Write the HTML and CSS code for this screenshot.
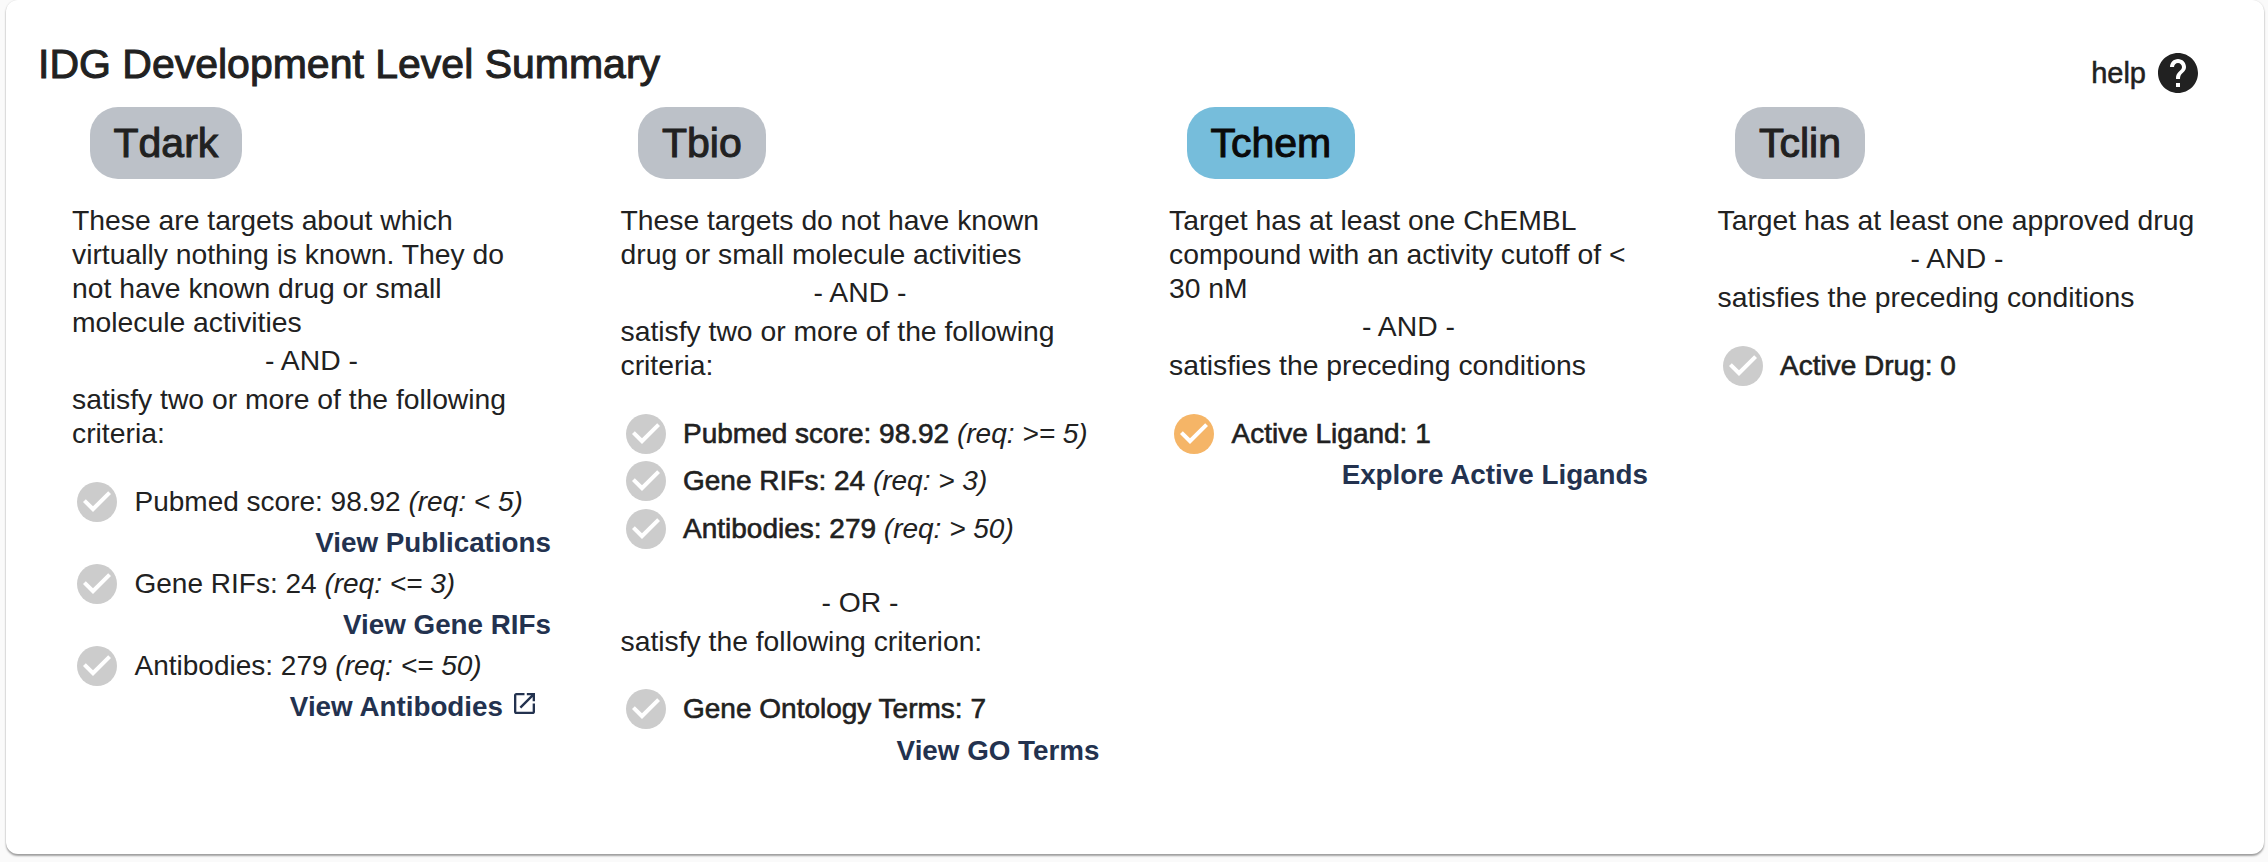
FILE: index.html
```html
<!DOCTYPE html>
<html lang="en">
<head>
<meta charset="utf-8">
<title>IDG Development Level Summary</title>
<link rel="stylesheet" href="styles.css">
</head>
<body>
<main class="card">
  <header class="head">
    <h1 class="title">IDG Development Level Summary</h1>
    <div class="help">help
      <svg class="help-icon" viewBox="2 2 20 20"><path fill="#212121" d="M12 2C6.48 2 2 6.48 2 12s4.48 10 10 10 10-4.48 10-10S17.52 2 12 2zm1 17h-2v-2h2v2zm2.07-7.75l-.9.92C13.45 12.9 13 13.5 13 15h-2v-.5c0-1.1.45-2.1 1.17-2.83l1.24-1.26c.37-.36.59-.86.59-1.41 0-1.1-.9-2-2-2s-2 .9-2 2H8c0-2.21 1.79-4 4-4s4 1.79 4 4c0 .88-.36 1.68-.93 2.25z"/></svg>
    </div>
  </header>
  <div class="cols">
    <section class="col">
      <div class="pill">Tdark</div>
      <p class="txt">These are targets about which virtually nothing is known. They do not have known drug or small molecule activities</p>
      <p class="sep">- AND -</p>
      <p class="txt">satisfy two or more of the following criteria:</p>
      <ul class="rows">
        <li class="row tall"><svg class="chk" viewBox="2 2 20 20"><circle cx="12" cy="12" r="10" fill="#cccccc"/><path fill="#fff" d="M10 17l-5-5 1.41-1.41L10 14.17l7.59-7.59L19 8l-9 9z"/></svg><span>Pubmed score: 98.92 <em>(req: &lt; 5)</em></span></li>
        <li class="lnk"><a href="#">View Publications</a></li>
        <li class="row tall"><svg class="chk" viewBox="2 2 20 20"><circle cx="12" cy="12" r="10" fill="#cccccc"/><path fill="#fff" d="M10 17l-5-5 1.41-1.41L10 14.17l7.59-7.59L19 8l-9 9z"/></svg><span>Gene RIFs: 24 <em>(req: &lt;= 3)</em></span></li>
        <li class="lnk"><a href="#">View Gene RIFs</a></li>
        <li class="row tall"><svg class="chk" viewBox="2 2 20 20"><circle cx="12" cy="12" r="10" fill="#cccccc"/><path fill="#fff" d="M10 17l-5-5 1.41-1.41L10 14.17l7.59-7.59L19 8l-9 9z"/></svg><span>Antibodies: 279 <em>(req: &lt;= 50)</em></span></li>
        <li class="lnk lnk-ext"><a href="#">View Antibodies</a><svg class="ext" viewBox="3 3 18 18"><path fill="#23324f" d="M19 19H5V5h7V3H5c-1.11 0-2 .9-2 2v14c0 1.1.89 2 2 2h14c1.1 0 2-.9 2-2v-7h-2v7zM14 3v2h3.59l-9.83 9.83 1.41 1.41L19 6.41V10h2V3h-7z"/></svg></li>
      </ul>
    </section>
    <section class="col">
      <div class="pill">Tbio</div>
      <p class="txt">These targets do not have known drug or small molecule activities</p>
      <p class="sep">- AND -</p>
      <p class="txt">satisfy two or more of the following criteria:</p>
      <ul class="rows rows-tight">
        <li class="row"><svg class="chk" viewBox="2 2 20 20"><circle cx="12" cy="12" r="10" fill="#cccccc"/><path fill="#fff" d="M10 17l-5-5 1.41-1.41L10 14.17l7.59-7.59L19 8l-9 9z"/></svg><span class="med">Pubmed score: 98.92 <em class="plain">(req: &gt;= 5)</em></span></li>
        <li class="row"><svg class="chk" viewBox="2 2 20 20"><circle cx="12" cy="12" r="10" fill="#cccccc"/><path fill="#fff" d="M10 17l-5-5 1.41-1.41L10 14.17l7.59-7.59L19 8l-9 9z"/></svg><span class="med">Gene RIFs: 24 <em class="plain">(req: &gt; 3)</em></span></li>
        <li class="row"><svg class="chk" viewBox="2 2 20 20"><circle cx="12" cy="12" r="10" fill="#cccccc"/><path fill="#fff" d="M10 17l-5-5 1.41-1.41L10 14.17l7.59-7.59L19 8l-9 9z"/></svg><span class="med">Antibodies: 279 <em class="plain">(req: &gt; 50)</em></span></li>
      </ul>
      <p class="sep sep-or">- OR -</p>
      <p class="txt">satisfy the following criterion:</p>
      <ul class="rows">
        <li class="row tall"><svg class="chk" viewBox="2 2 20 20"><circle cx="12" cy="12" r="10" fill="#cccccc"/><path fill="#fff" d="M10 17l-5-5 1.41-1.41L10 14.17l7.59-7.59L19 8l-9 9z"/></svg><span class="med">Gene Ontology Terms: 7</span></li>
        <li class="lnk"><a href="#">View GO Terms</a></li>
      </ul>
    </section>
    <section class="col">
      <div class="pill pill-on">Tchem</div>
      <p class="txt">Target has at least one ChEMBL compound with an activity cutoff of &lt; 30 nM</p>
      <p class="sep">- AND -</p>
      <p class="txt">satisfies the preceding conditions</p>
      <ul class="rows">
        <li class="row tall"><svg class="chk" viewBox="2 2 20 20"><circle cx="12" cy="12" r="10" fill="#f5b567"/><path fill="#fff" d="M10 17l-5-5 1.41-1.41L10 14.17l7.59-7.59L19 8l-9 9z"/></svg><span class="med">Active Ligand: 1</span></li>
        <li class="lnk"><a href="#">Explore Active Ligands</a></li>
      </ul>
    </section>
    <section class="col">
      <div class="pill">Tclin</div>
      <p class="txt">Target has at least one approved drug</p>
      <p class="sep">- AND -</p>
      <p class="txt">satisfies the preceding conditions</p>
      <ul class="rows">
        <li class="row tall"><svg class="chk" viewBox="2 2 20 20"><circle cx="12" cy="12" r="10" fill="#cccccc"/><path fill="#fff" d="M10 17l-5-5 1.41-1.41L10 14.17l7.59-7.59L19 8l-9 9z"/></svg><span class="med">Active Drug: 0</span></li>
      </ul>
    </section>
  </div>
</main>
</body>
</html>
```

FILE: styles.css
```css
* { box-sizing: border-box; }
html, body { margin: 0; padding: 0; }
body {
  background: #fafafa;
  height: 862px;
  overflow: hidden;
  padding: 0 4px 8px 6px;
  font-family: "Liberation Sans", Arial, sans-serif;
  color: #212121;
  font-size: 28.3px;
}
.card {
  height: 854px;
  background: #fff;
  border-radius: 12px;
  box-shadow: 0 2px 2px rgba(0,0,0,.35), 0 0 2px rgba(0,0,0,.12);
  padding: 0 0 0 32px;
}
.head {
  display: flex;
  justify-content: space-between;
  align-items: flex-start;
  height: 107px;
  padding: 42px 66px 0 0;
}
.title {
  margin: 0;
  font-size: 41px;
  line-height: 44px;
  font-weight: 400;
  -webkit-text-stroke: 1px #212121;
}
.help {
  display: flex;
  align-items: center;
  gap: 12px;
  margin-top: 9px;
  height: 44px;
  font-size: 29px;
  -webkit-text-stroke: .5px #212121;
}
.help-icon { width: 40px; height: 40px; display: block; }
.cols { display: grid; grid-template-columns: repeat(4, 548.5px); }
.col { padding: 0 35.5px 0 34px; }
.pill {
  display: inline-block;
  margin-left: 17.5px;
  height: 72px;
  line-height: 72px;
  padding: 0 24px;
  border-radius: 28px;
  background: #bcc1c8;
  font-size: 41px;
  -webkit-text-stroke: 1px #212121;
}
.pill-on { background: #76bddb; color: #0a0a0a; -webkit-text-stroke-color: #0a0a0a; }
.txt { margin: 0; line-height: 34px; }
.pill + .txt { margin-top: 24px; }
.sep { margin: 0; text-align: center; line-height: 38px; padding: 2px 0; height: 42px; }
.sep + .txt { margin-top: 1px; }
.rows { list-style: none; margin: 31px 0 0; padding: 0; }
.rows-tight { margin-top: 28px; }
.row { display: flex; align-items: center; height: 47.5px; gap: 17.5px; padding-left: 5px; font-size: 28px; }
.row.tall { height: 41px; }
.chk { width: 40px; height: 40px; flex: none; display: block; }
.med { -webkit-text-stroke: .6px #212121; }
.med .plain { -webkit-text-stroke: 0; }
.lnk { display: flex; justify-content: flex-end; align-items: center; height: 41px; padding-right: 0; }
.lnk a { color: #23324f; font-weight: 700; font-size: 27.8px; text-decoration: none; position: relative; top: .5px; }
.lnk-ext { padding-right: 16px; gap: 11px; }
.ext { width: 21px; height: 21px; margin-top: -6px; display: block; }
.sep-or { margin-top: 28px; }
```
